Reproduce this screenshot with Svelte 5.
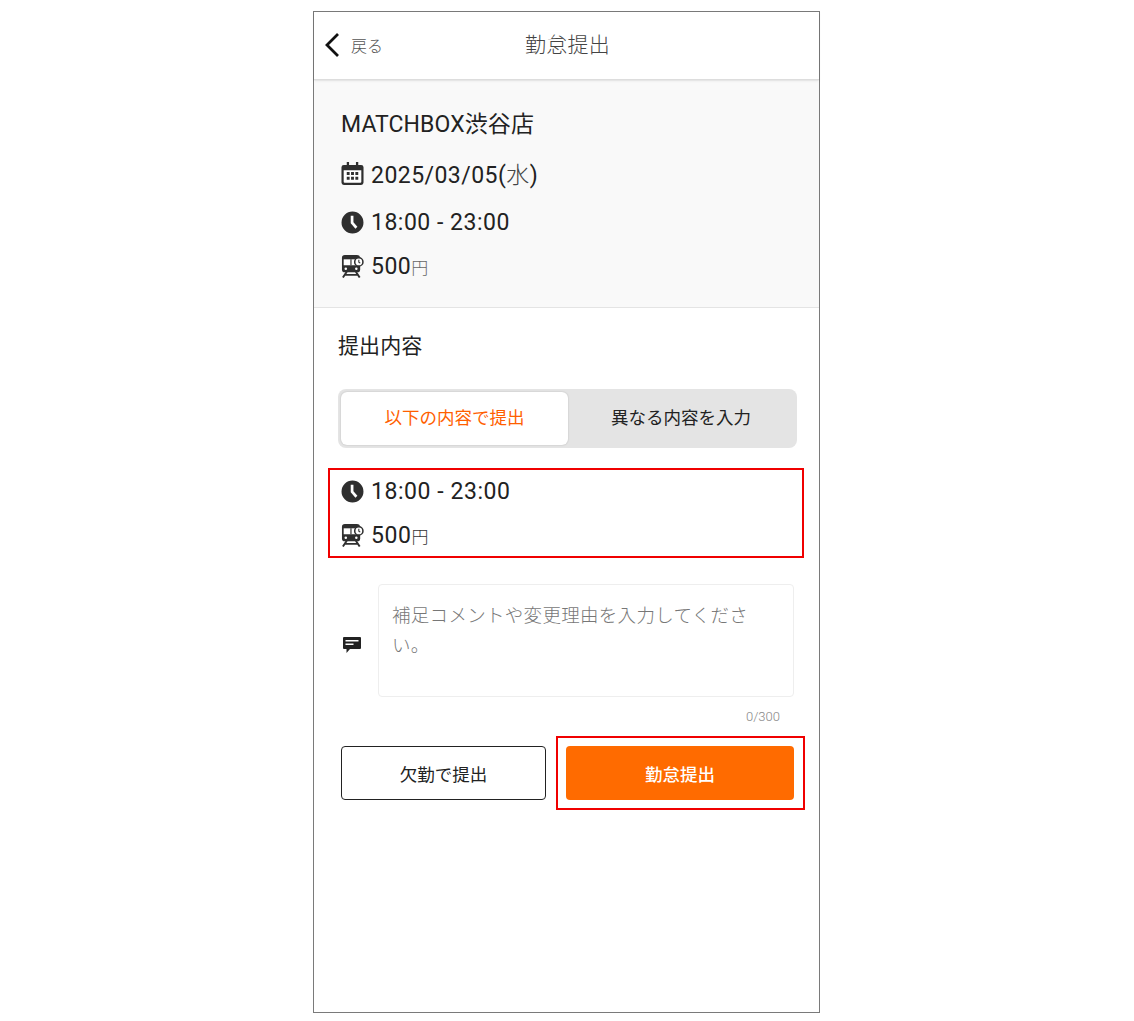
<script>
	const clockPath = 'M12 1.500a10.500 10.500 0 1 0 0 21 10.500 10.500 0 0 0 0-21z';
</script>

{#snippet clock()}
	<svg class="icon" viewBox="1 1 22 22" aria-hidden="true">
		<path d={clockPath} fill="#2f2f2f" />
		<path d="M10.300 5.500h2.600v6.300l3.800 4.300-1.900 1.800-4.500-5.100z" fill="#fff" />
	</svg>
{/snippet}

{#snippet train()}
	<svg class="icon" viewBox="0 0 24 24" aria-hidden="true">
		<path d="M4 0h12.500a3.500 3.500 0 0 1 3.500 3.500V15a3 3 0 0 1-3 3H4a3 3 0 0 1-3-3V3a3 3 0 0 1 3-3z" fill="#2f2f2f" />
		<path d="M2.800 4.500h15v6.200h-15z" fill="#fff" />
		<path d="M9.800 4.500h1.200v6.200H9.800z" fill="#2f2f2f" />
		<circle cx="5" cy="14.300" r="1.300" fill="#fff" />
		<circle cx="16" cy="14.300" r="1.300" fill="#fff" />
		<path d="M6 17.500 2 23.500M15.500 17.500l4 6M4.500 20.700h12.500" fill="none" stroke="#2f2f2f" stroke-width="2" />
		<circle cx="18.600" cy="7.200" r="4.300" fill="#fff" stroke="#2f2f2f" stroke-width="1.600" />
		<path d="M18.600 5v2.500l1.500 1" fill="none" stroke="#2f2f2f" stroke-width="1.100" />
	</svg>
{/snippet}

<div class="phone">
	<header class="topbar">
		<button class="back">
			<svg viewBox="0 0 16 26" width="16" height="26" aria-hidden="true">
				<path d="M14 2 3 13l11 11" fill="none" stroke="#111" stroke-width="2.800" />
			</svg>
			<span>戻る</span>
		</button>
		<h1>勤怠提出</h1>
	</header>

	<section class="summary">
		<h2>MATCHBOX渋谷店</h2>
		<div class="row date">
			<svg class="icon" viewBox="0 0 24 24" aria-hidden="true">
				<path d="M6 0h2.400v3h7.200V0H18v3h3a2.500 2.500 0 0 1 2.500 2.500v16A2.500 2.500 0 0 1 21 24H3a2.500 2.500 0 0 1-2.500-2.500v-16A2.500 2.500 0 0 1 3 3h3z" fill="#2f2f2f" />
				<path d="M2.800 8.500h18.400v12.200a1 1 0 0 1-1 1H3.800a1 1 0 0 1-1-1z" fill="#fff" />
				<path d="M6 10.500h3v3H6zM10.500 10.500h3v3h-3zM15 10.500h3v3h-3zM6 15.500h3v3H6zM10.500 15.500h3v3h-3zM15 15.500h3v3h-3z" fill="#2f2f2f" />
			</svg>
			<span>2025/03/05(<i>水</i>)</span>
		</div>
		<div class="row time">
			{@render clock()}
			<span>18:00 - 23:00</span>
		</div>
		<div class="row fare">
			{@render train()}
			<span>500<small>円</small></span>
		</div>
	</section>

	<section class="form">
		<h3>提出内容</h3>

		<div class="tabs">
			<button class="tab active">以下の内容で提出</button>
			<button class="tab">異なる内容を入力</button>
		</div>

		<div class="highlight">
			<div class="row">
				{@render clock()}
				<span>18:00 - 23:00</span>
			</div>
			<div class="row">
				{@render train()}
				<span>500<small>円</small></span>
			</div>
		</div>

		<div class="comment">
			<svg class="comment-icon" viewBox="0 0 18 16" aria-hidden="true">
				<path d="M1 0h16a1 1 0 0 1 1 1v10a1 1 0 0 1-1 1H7l-3.500 4v-4H1a1 1 0 0 1-1-1V1a1 1 0 0 1 1-1z" fill="#222" />
				<path d="M2.500 3h13v1.500h-13zM2.500 6.500h8v1.500h-8z" fill="#fff" />
			</svg>
			<div class="textarea">補足コメントや変更理由を入力してください。</div>
		</div>
		<div class="counter">0/300</div>

		<div class="actions">
			<button class="btn outline">欠勤で提出</button>
			<div class="btn-frame">
				<button class="btn primary">勤怠提出</button>
			</div>
		</div>
	</section>
</div>

<style>
:global(body) {
	margin: 0;
	background: #fff;
}

.phone {
	width: 505px;
	height: 1000px;
	margin: 11px 0 0 313px;
	border: 1px solid #7a7a7a;
	background: #fff;
	font-family: Roboto, "Noto Sans CJK JP", sans-serif;
	color: #222;
	display: flex;
	flex-direction: column;
}

button {
	font-family: inherit;
	cursor: pointer;
}

.topbar {
	height: 68px;
	box-sizing: border-box;
	padding-bottom: 6px;
	flex-shrink: 0;
	position: relative;
	display: flex;
	align-items: center;
	justify-content: center;
	border-bottom: 1px solid #ddd;
	box-shadow: 0 1px 2px rgba(0,0,0,.15);
}
.topbar h1 {
	margin: 0 0 0 2px;
	font-size: 21px;
	font-weight: 300;
	letter-spacing: .3px;
	color: #444;
}
.back {
	position: absolute;
	left: 10px;
	top: 20px;
	display: flex;
	align-items: center;
	gap: 11px;
	background: none;
	border: none;
	padding: 0;
	font-size: 16px;
	font-weight: 300;
	color: #555;
}

.summary {
	margin-top: 2px;
	height: 226px;
	flex-shrink: 0;
	box-sizing: border-box;
	padding: 27px 27px 0;
	background: #f9f9f9;
	border-bottom: 1px solid #e4e4e4;
}
.summary h2 {
	margin: 0 0 16px;
	font-size: 23px;
	line-height: 32px;
	font-weight: 400;
	letter-spacing: .1px;
	color: #222;
}

.row {
	display: flex;
	align-items: center;
	gap: 7px;
	height: 32px;
	font-size: 23px;
	letter-spacing: .5px;
	font-weight: 400;
	color: #222;
}
.date { letter-spacing: .45px; }
.date i {
	font-style: normal;
	font-weight: 300;
	color: #444;
}
.time { margin-top: 15px; padding-top: 2px; }
.fare { margin-top: 12px; }
.row small {
	font-size: 17px;
	font-weight: 300;
	color: #666;
}

.icon {
	width: 23px;
	height: 23px;
	flex-shrink: 0;
}

.form {
	padding: 0 23px 0 24px;
}
.form h3 {
	margin: 23px 0 0;
	font-size: 21px;
	line-height: 30px;
	font-weight: 400;
	letter-spacing: .1px;
	color: #222;
}

.tabs {
	display: flex;
	margin: 28px 0 0;
	width: 459px;
	height: 59px;
	box-sizing: border-box;
	padding: 3px;
	background: #e4e4e4;
	border-radius: 8px;
}
.tab {
	flex: 1;
	border: none;
	background: none;
	border-radius: 6px;
	font-size: 17.500px;
	color: #222;
	padding: 0 0 4px;
}
.tab.active {
	flex: 0 0 227px;
	background: #fff;
	color: #ff5f00;
	box-shadow: 0 0 2px rgba(0,0,0,.2);
}

.highlight {
	margin: 20px 0 0 -10px;
	width: 476px;
	height: 90px;
	box-sizing: border-box;
	border: 2px solid #f00000;
	padding: 5px 0 0 11px;
}
.highlight .row + .row { margin-top: 12px; }
.highlight .row { letter-spacing: .55px; }
.highlight .row small { color: #333; }

.comment {
	display: flex;
	align-items: center;
	margin-top: 26px;
}
.comment-icon {
	width: 18px;
	height: 16px;
	margin: 8px 0 0 5px;
	flex-shrink: 0;
}
.textarea {
	margin-left: 17px;
	width: 416px;
	height: 113px;
	box-sizing: border-box;
	border: 1px solid #eee;
	border-radius: 4px;
	padding: 16px 13px;
	font-size: 18.500px;
	line-height: 30px;
	font-weight: 300;
	letter-spacing: .3px;
	color: #777;
}
.counter {
	margin-top: 12px;
	padding-right: 16px;
	text-align: right;
	font-size: 13px;
	line-height: 16px;
	font-weight: 300;
	color: #888;
}

.actions {
	display: flex;
	align-items: center;
	margin-top: 11px;
}
.btn {
	display: block;
	height: 54px;
	border-radius: 4px;
	font-size: 17.500px;
	padding: 0;
}
.outline {
	flex: 0 0 205px;
	margin-left: 3px;
	background: #fff;
	border: 1px solid #222;
	color: #222;
}
.btn-frame {
	flex: 0 0 249px;
	margin-left: 10px;
	height: 74px;
	box-sizing: border-box;
	border: 2px solid #f00000;
	padding: 8px 9px 8px 8px;
}
.primary {
	width: 100%;
	background: #ff6b00;
	border: none;
	color: #fff;
	font-weight: 500;
}
</style>
